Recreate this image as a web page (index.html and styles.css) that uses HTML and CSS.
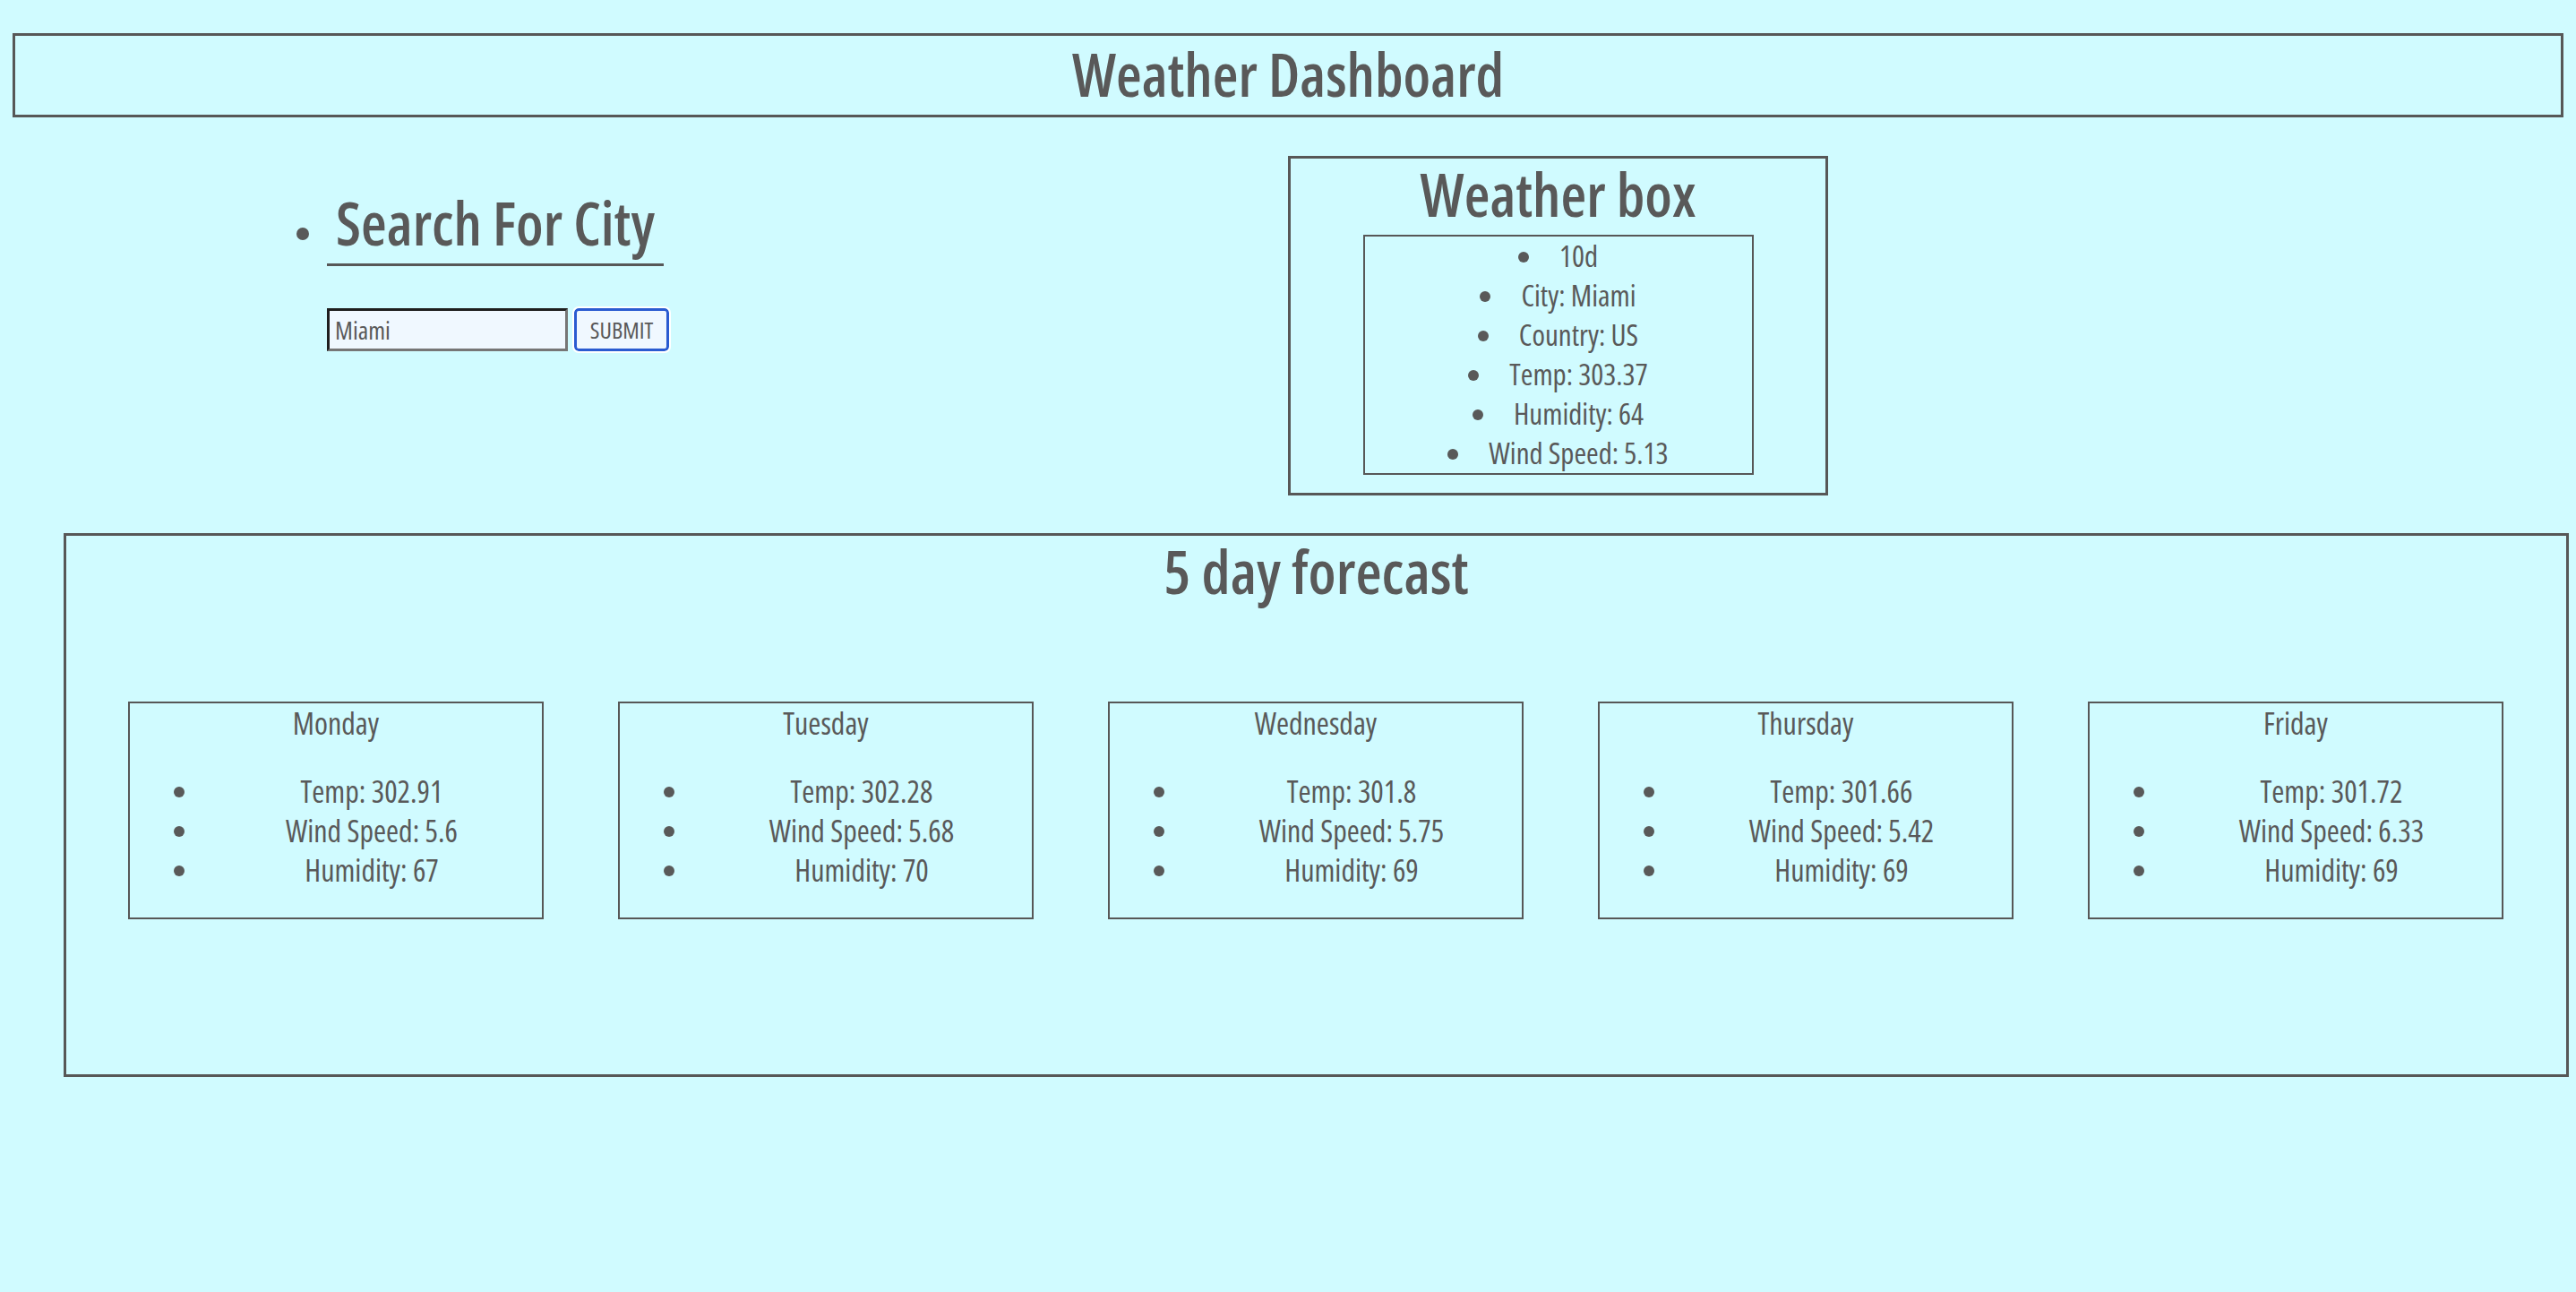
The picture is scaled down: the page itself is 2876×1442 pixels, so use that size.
FILE: index.html
```html
<!DOCTYPE html>
<html lang="en">
<head>
<meta charset="utf-8">
<title>Weather Dashboard</title>
<link rel="stylesheet" href="styles.css">
</head>
<body>
<header class="site-header">
  <h1 class="site-title">Weather Dashboard</h1>
</header>
<main class="page">
  <section class="top-row">
    <div class="search-col">
      <ul class="search-list">
        <li class="search-item">
          <h2 class="search-title">Search For City</h2>
          <form class="search-form">
            <input class="city-input" type="text" value="Miami">
            <button class="submit-btn" type="button">SUBMIT</button>
          </form>
        </li>
      </ul>
    </div>
    <div class="weather-col">
      <div class="weather-box">
        <h2 class="box-title">Weather box</h2>
        <ul class="current-list">
          <li>10d</li>
          <li>City: Miami</li>
          <li>Country: US</li>
          <li>Temp: 303.37</li>
          <li>Humidity: 64</li>
          <li>Wind Speed: 5.13</li>
        </ul>
      </div>
    </div>
  </section>
  <section class="forecast">
    <h2 class="forecast-title">5 day forecast</h2>
    <div class="cards">
      <div class="card">
        <p class="card-day">Monday</p>
        <ul class="card-list">
          <li>Temp: 302.91</li>
          <li>Wind Speed: 5.6</li>
          <li>Humidity: 67</li>
        </ul>
      </div>
      <div class="card">
        <p class="card-day">Tuesday</p>
        <ul class="card-list">
          <li>Temp: 302.28</li>
          <li>Wind Speed: 5.68</li>
          <li>Humidity: 70</li>
        </ul>
      </div>
      <div class="card">
        <p class="card-day">Wednesday</p>
        <ul class="card-list">
          <li>Temp: 301.8</li>
          <li>Wind Speed: 5.75</li>
          <li>Humidity: 69</li>
        </ul>
      </div>
      <div class="card">
        <p class="card-day">Thursday</p>
        <ul class="card-list">
          <li>Temp: 301.66</li>
          <li>Wind Speed: 5.42</li>
          <li>Humidity: 69</li>
        </ul>
      </div>
      <div class="card">
        <p class="card-day">Friday</p>
        <ul class="card-list">
          <li>Temp: 301.72</li>
          <li>Wind Speed: 6.33</li>
          <li>Humidity: 69</li>
        </ul>
      </div>
    </div>
  </section>
</main>
</body>
</html>
```

FILE: styles.css
```css
* {
  box-sizing: border-box;
}

html, body {
  margin: 0;
  padding: 0;
  background: #d0fbff;
}

body {
  color: #595959;
  font-family: "Open Sans", sans-serif;
  font-stretch: 75%;
  font-size: 31px;
  min-height: 1442px;
  padding-top: 37px;
}

.site-header {
  margin: 0 14px;
  height: 94px;
  border: 3px solid #575757;
}

.site-title,
.search-title,
.box-title,
.forecast-title {
  font-size: 66px;
  font-weight: 600;
}

.forecast-title {
  font-size: 67px;
}

.site-title {
  margin: 0;
  line-height: 84px;
  text-align: center;
}

.top-row {
  display: grid;
  grid-template-columns: 1438px 1fr;
}

.search-list {
  margin: 82px 0 0;
  padding-left: 365px;
  font-size: 31px;
}

.search-item::marker {
  font-size: 38px;
}

.search-title {
  display: inline-block;
  margin: 0;
  padding: 0 10px 11px;
  line-height: 70px;
  border-bottom: 3px solid #575757;
}

.search-form {
  display: flex;
  gap: 7px;
  margin-top: 47px;
}

.city-input {
  width: 269px;
  height: 48px;
  padding: 0 6px;
  border: 3px solid;
  border-color: #1e1e1e #767676 #767676 #1e1e1e;
  background: #f0f8ff;
  color: #595959;
  font-family: inherit;
  font-stretch: 75%;
  font-size: 28px;
}

.submit-btn {
  width: 106px;
  height: 48px;
  padding: 0;
  border: 3px solid #2a5bd1;
  border-radius: 5px;
  outline: 2px solid #ffffff;
  background: #f0f8ff;
  color: #595959;
  font-family: inherit;
  font-stretch: 75%;
  font-size: 26px;
}

.weather-box {
  width: 603px;
  margin-top: 43px;
  padding: 4px 0 20px;
  border: 3px solid #575757;
}

.box-title {
  margin: 0 0 10px;
  line-height: 71px;
  text-align: center;
}

.current-list {
  width: 436px;
  margin: 0 auto;
  padding: 0;
  border: 2px solid #575757;
  list-style-position: inside;
  text-align: center;
  font-size: 33px;
  line-height: 44px;
}

.forecast {
  width: 2797px;
  height: 607px;
  margin: 42px 0 0 71px;
  border: 3px solid #575757;
  padding-top: 4px;
}

.forecast-title {
  margin: 0;
  line-height: 70px;
  text-align: center;
}

.cards {
  display: flex;
  gap: 83px;
  margin-top: 111px;
  padding-left: 69px;
}

.card {
  width: 464px;
  height: 243px;
  border: 2px solid #575757;
  text-align: center;
  font-size: 34px;
}

.card-day {
  margin: 0;
  line-height: 44px;
}

.card-list {
  margin: 32px 0 0;
  padding-left: 80px;
  line-height: 44px;
}
```
